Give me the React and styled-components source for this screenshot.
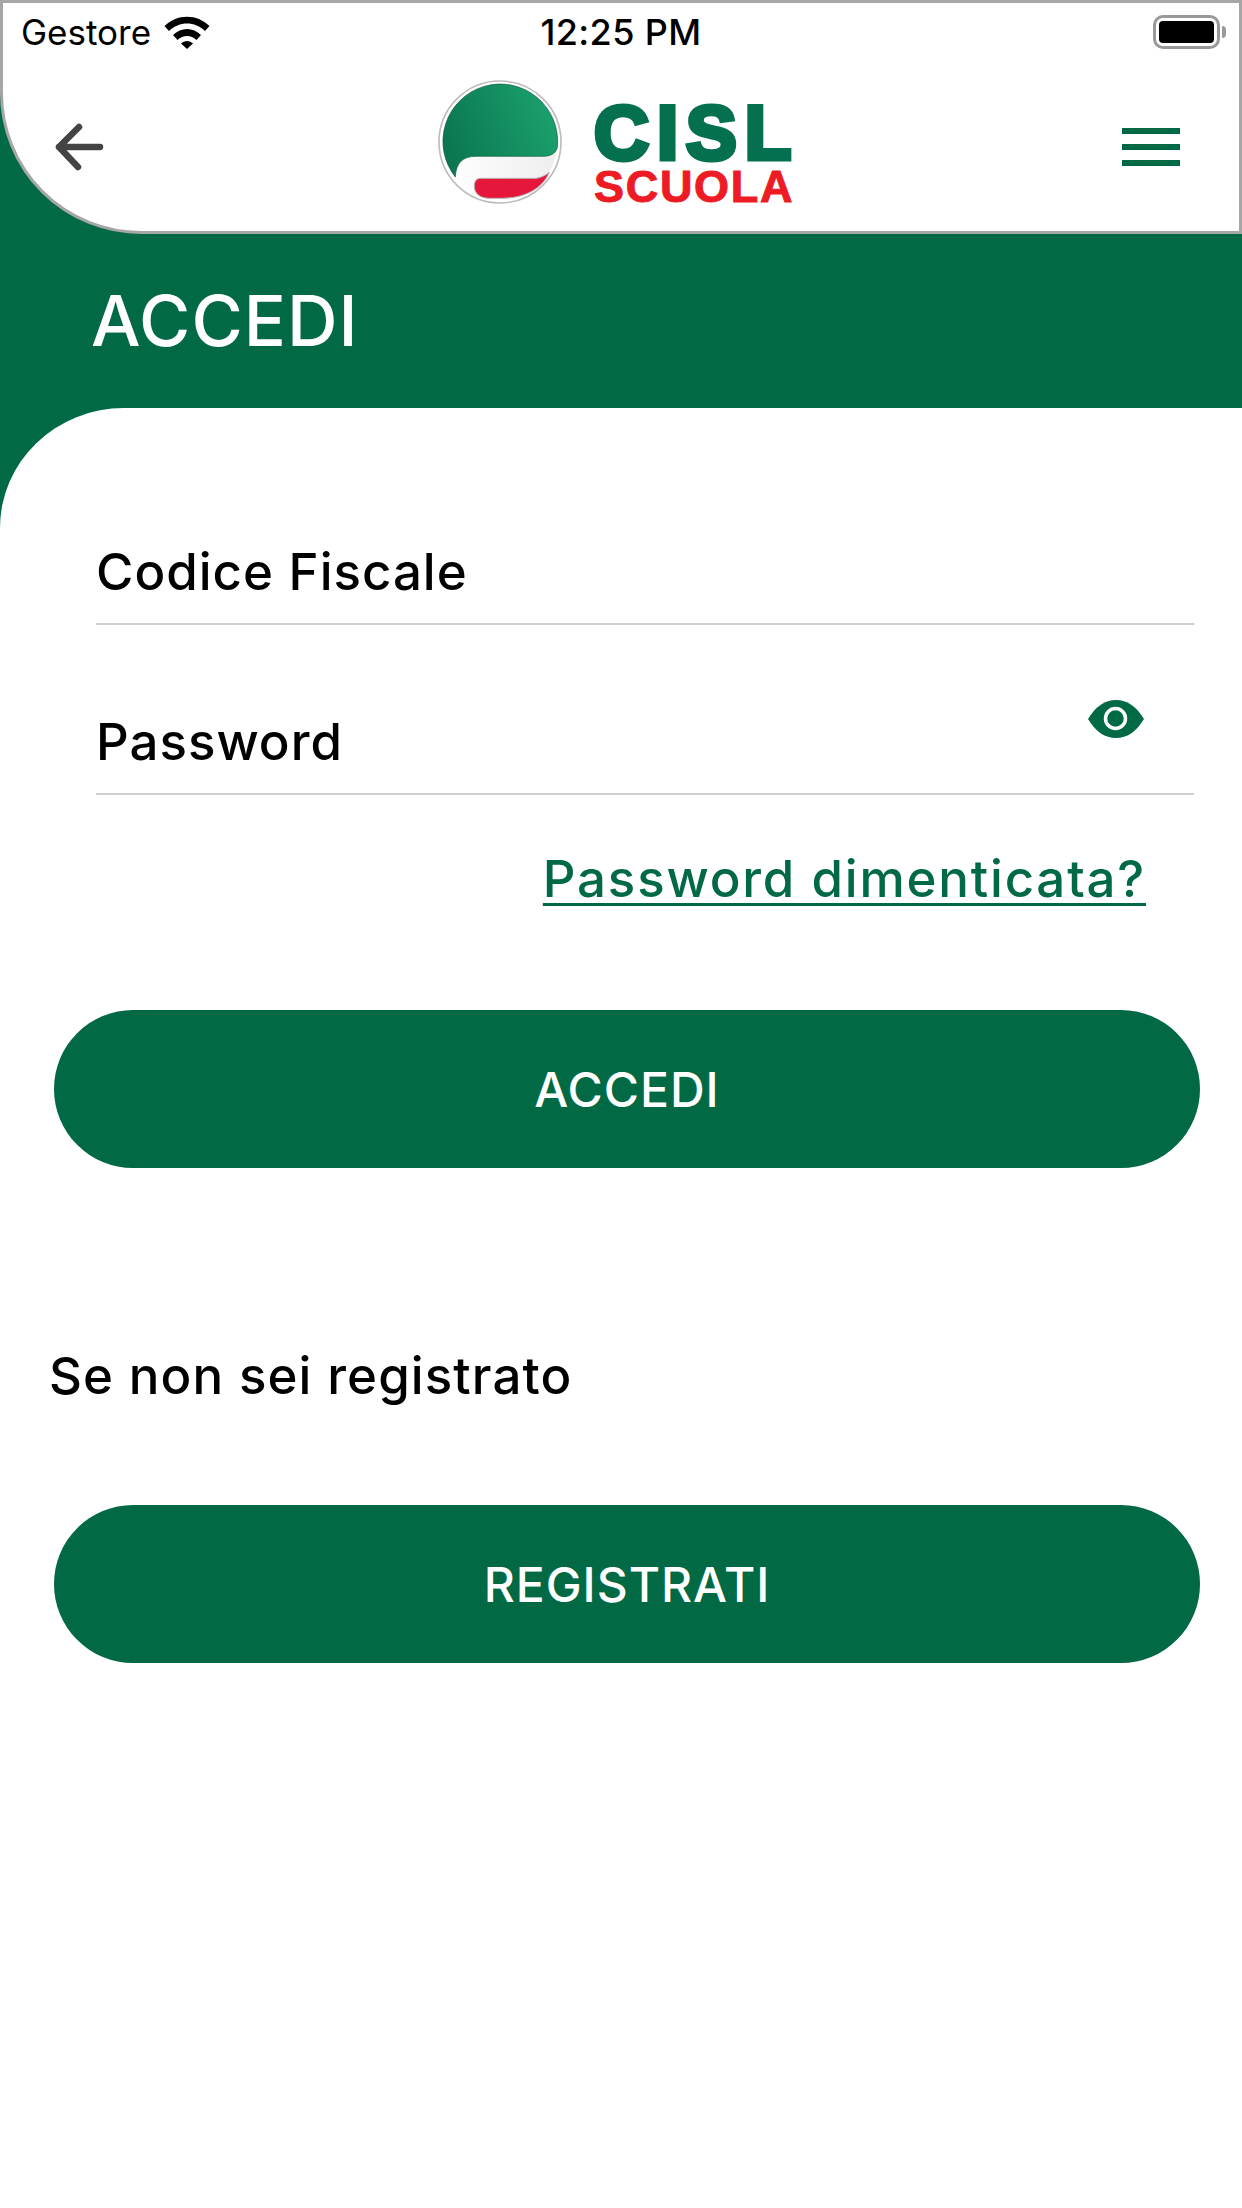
import styled, { createGlobalStyle } from 'styled-components'

const green = '#026945'

const GlobalStyle = createGlobalStyle`
  html, body {
    margin: 0;
    padding: 0;
    background: #fff;
  }
  * {
    box-sizing: border-box;
  }
`

const Page = styled.div`
  width: 1242px;
  height: 2208px;
  background: #fff;
  overflow: hidden;
  font-family: Inter, "Noto Sans", sans-serif;
  color: #000;
`

const HeaderWrap = styled.div`
  background: ${green};
`

const Header = styled.header`
  height: 234px;
  background: #fff;
  border: 3px solid #a6a6a6;
  border-bottom-left-radius: 141px;
`

const StatusBar = styled.div`
  height: 57px;
  display: grid;
  grid-template-columns: 1fr auto 1fr;
  align-items: center;
  padding: 0 13px 0 18px;
  font-family: Inter, sans-serif;
  font-size: 35px;
  line-height: 40px;
`

const Carrier = styled.div`
  display: flex;
  align-items: center;
  gap: 13px;
`

const Clock = styled.div`
  font-weight: 500;
  font-size: 36px;
  letter-spacing: 0.4px;
  margin-right: 5px;
`

const BatteryWrap = styled.div`
  justify-self: end;
  display: flex;
  align-items: center;
  gap: 2px;
`

const BatteryBody = styled.div`
  width: 67px;
  height: 34px;
  border: 3px solid #999;
  border-radius: 10px;
  padding: 3px;
`

const BatteryFill = styled.div`
  width: 100%;
  height: 100%;
  background: #000;
  border-radius: 4px;
`

const BatteryNub = styled.div`
  width: 4px;
  height: 12px;
  background: #999;
  border-radius: 0 4px 4px 0;
`

const NavBar = styled.nav`
  height: 171px;
  display: grid;
  grid-template-columns: 382px 1fr auto;
  align-items: center;
  padding: 2px 59px 0 52px;
`

const Logo = styled.div`
  display: flex;
  align-items: center;
  gap: 31px;
  margin-top: -10px;
`

const LogoText = styled.div`
  display: flex;
  flex-direction: column;
  padding-top: 24px;
  font-family: "Liberation Sans", Arial, sans-serif;
  font-weight: 700;
`

const LogoCisl = styled.span`
  font-size: 76px;
  line-height: 65px;
  letter-spacing: 8px;
  color: #04704f;
  -webkit-text-stroke: 5px #04704f;
`

const LogoScuola = styled.span`
  font-size: 45px;
  line-height: 43px;
  letter-spacing: 1.7px;
  color: #ed1c24;
  -webkit-text-stroke: 1px #ed1c24;
`

const Burger = styled.div`
  width: 58px;
  display: flex;
  flex-direction: column;
  gap: 10px;
`

const BurgerBar = styled.div`
  height: 6px;
  background: ${green};
`

const TitleBand = styled.div`
  height: 174px;
  background: ${green};
  padding-left: 91px;
  display: flex;
  align-items: center;
`

const Title = styled.h1`
  margin: 0;
  font-size: 70px;
  font-weight: 450;
  line-height: 1;
  letter-spacing: 1px;
  color: #fff;
`

const CurveStrip = styled.div`
  height: 120px;
  background: ${green};
`

const CurveFill = styled.div`
  height: 100%;
  background: #fff;
  border-top-left-radius: 155px 150px;
`

const Field = styled.div`
  position: relative;
  height: ${(p) => p.$height}px;
  margin: 0 48px 0 96px;
  border-bottom: 2px solid #cfcfcf;
  display: flex;
  align-items: flex-end;
  padding-bottom: 21px;
`

const FieldLabel = styled.span`
  font-size: 51px;
  font-weight: 500;
  line-height: 60px;
  letter-spacing: 1px;
`

const EyeButton = styled.div`
  position: absolute;
  right: 49px;
  top: 74px;
  line-height: 0;
`

const ForgotRow = styled.div`
  display: flex;
  justify-content: flex-end;
  padding: 52px 96px 0 0;
`

const ForgotLink = styled.a`
  font-size: 51px;
  line-height: 64px;
  font-weight: 500;
  letter-spacing: 1.8px;
  color: ${green};
  text-decoration: underline;
  text-decoration-thickness: 3px;
  text-underline-offset: 6px;
`

const PrimaryButton = styled.button`
  display: block;
  width: 1146px;
  height: 158px;
  margin: ${(p) => p.$top}px 0 0 54px;
  border: none;
  border-radius: 79px;
  background: ${green};
  color: #fff;
  font-family: Inter, sans-serif;
  font-size: 48px;
  font-weight: 500;
  letter-spacing: 1px;
  padding: 0;
`

const RegisterText = styled.p`
  margin: 178px 0 0 49px;
  font-size: 51px;
  line-height: 60px;
  font-weight: 500;
  letter-spacing: 1.1px;
`

const WifiIcon = () => (
  <svg width="46" height="34" viewBox="0 0 46 34">
    <path d="M0.5 11 C13 -1.5 33 -1.5 45.5 11 L41 16 C31 6 15 6 5 16 Z" fill="#000" />
    <path d="M9 20 C17 12 29 12 37 20 L32.5 25 C27 19.5 19 19.5 13.5 25 Z" fill="#000" />
    <path d="M17 28.5 C20.5 25 25.5 25 29 28.5 L23 34 Z" fill="#000" />
  </svg>
)

const BackIcon = () => (
  <svg width="50" height="48" viewBox="0 0 50 48">
    <path
      d="M45 24 H4 M4 24 L24 4 M4 24 L23 44"
      fill="none"
      stroke="#444"
      strokeWidth="6.5"
      strokeLinecap="round"
      strokeLinejoin="round"
    />
  </svg>
)

const EyeIcon = () => (
  <svg width="58" height="40" viewBox="0 0 58 40">
    <path d="M1 20 C9 7 18 1 29 1 C40 1 49 7 57 20 C49 33 40 39 29 39 C18 39 9 33 1 20 Z" fill={green} />
    <circle cx="28.5" cy="19.5" r="10" fill="none" stroke="#fff" strokeWidth="3.5" />
  </svg>
)

const LogoMark = () => (
  <svg width="126" height="126" viewBox="78 58 378 378">
    <defs>
      <linearGradient id="cislGreen" x1="0" y1="0.6" x2="1" y2="0.3">
        <stop offset="0" stopColor="#0b7650" />
        <stop offset="1" stopColor="#1ba26e" />
      </linearGradient>
      <linearGradient id="cislBand" x1="0" y1="0" x2="1" y2="0">
        <stop offset="0" stopColor="#ffffff" />
        <stop offset="1" stopColor="#eeeeee" />
      </linearGradient>
    </defs>
    <circle cx="267" cy="247" r="183" fill="#fff" stroke="#bdbdbd" strokeWidth="5" />
    <circle cx="267" cy="247" r="172" fill="url(#cislBand)" />
    <path
      d="M133 352 A172 172 0 1 1 439 262 C436 280 420 290 395 290 L195 290 C155 290 135 310 133 352 Z"
      fill="url(#cislGreen)"
      stroke="#0a5a3e"
      strokeWidth="2"
    />
    <path
      d="M208 356 L375 356 C390 354 405 347 415 338 C395 385 345 416 270 416 L235 416 C205 416 190 400 190 380 C190 366 195 357 208 356 Z"
      fill="#e5173b"
      stroke="#b5b5b5"
      strokeWidth="3"
    />
  </svg>
)

export default function App() {
  return (
    <Page>
      <GlobalStyle />
      <HeaderWrap>
        <Header>
          <StatusBar>
            <Carrier>
              Gestore
              <WifiIcon />
            </Carrier>
            <Clock>12:25 PM</Clock>
            <BatteryWrap>
              <BatteryBody>
                <BatteryFill />
              </BatteryBody>
              <BatteryNub />
            </BatteryWrap>
          </StatusBar>
          <NavBar>
            <BackIcon />
            <Logo>
              <LogoMark />
              <LogoText>
                <LogoCisl>CISL</LogoCisl>
                <LogoScuola>SCUOLA</LogoScuola>
              </LogoText>
            </Logo>
            <Burger>
              <BurgerBar />
              <BurgerBar />
              <BurgerBar />
            </Burger>
          </NavBar>
        </Header>
      </HeaderWrap>
      <TitleBand>
        <Title>ACCEDI</Title>
      </TitleBand>
      <CurveStrip>
        <CurveFill />
      </CurveStrip>
      <Field $height={97}>
        <FieldLabel>Codice Fiscale</FieldLabel>
      </Field>
      <Field $height={170}>
        <FieldLabel>Password</FieldLabel>
        <EyeButton>
          <EyeIcon />
        </EyeButton>
      </Field>
      <ForgotRow>
        <ForgotLink>Password dimenticata?</ForgotLink>
      </ForgotRow>
      <PrimaryButton $top={99}>ACCEDI</PrimaryButton>
      <RegisterText>Se non sei registrato</RegisterText>
      <PrimaryButton $top={99}>REGISTRATI</PrimaryButton>
    </Page>
  )
}
